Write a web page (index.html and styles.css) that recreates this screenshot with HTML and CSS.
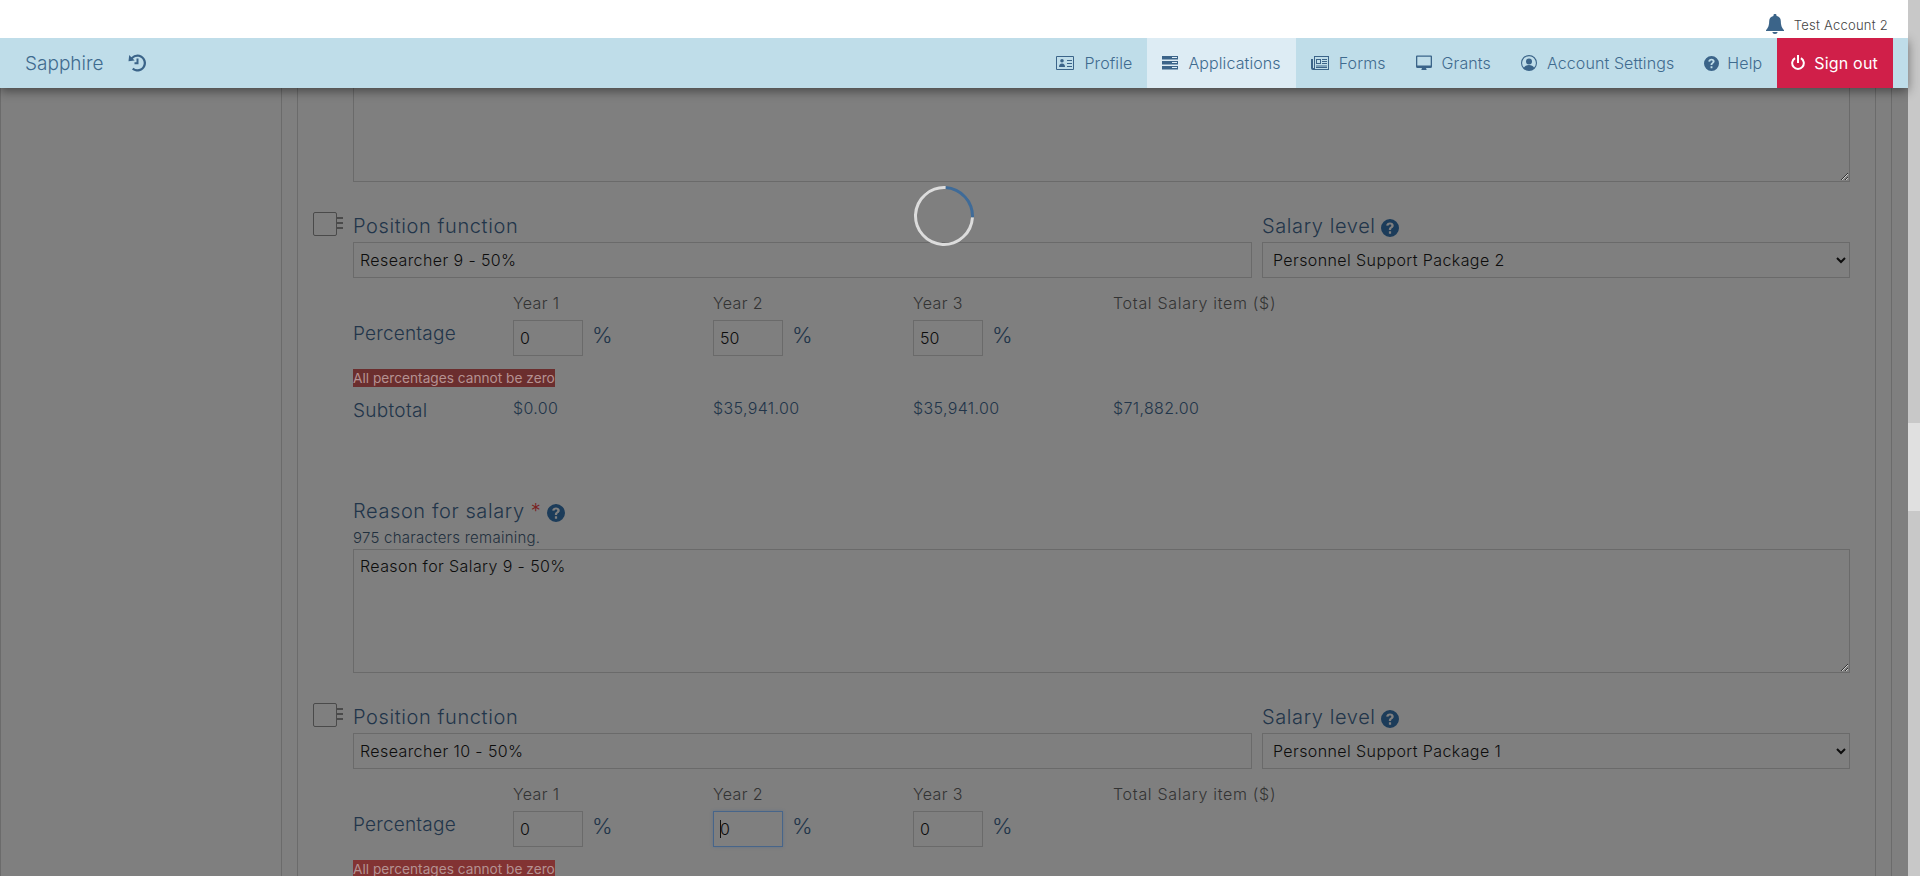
FILE: index.html

```html
<!DOCTYPE html>
<html lang="en">
<head>
  <meta charset="UTF-8">
  <meta name="viewport" content="width=device-width, initial-scale=1">
  <title>Sapphire</title>
  <link rel="stylesheet" href="styles.css">
</head>
<body>

  <div id="page">
    <div id="user-bar">
      <svg class="bell" viewBox="0 0 14 20" preserveAspectRatio="none"><path d="M7 0c-.7 0-1.2.5-1.200 1.200v.9C3.600 2.700 2.500 4.600 2.500 7c0 4.200-.7 6.500-2.500 9.200v.8h14v-.8C12.200 13.500 11.500 11.200 11.500 7c0-2.400-1.100-4.300-3.300-4.900v-.9C8.200.5 7.700 0 7 0zM5 18c0 1.100.9 2 2 2s2-.9 2-2H5z"/></svg>
      <span>Test Account 2</span>
    </div>

    <nav id="main-nav">
      <a class="brand">Sapphire</a>
      <svg class="history" viewBox="0 0 18 18"><path d="M9.500 0.500A8.500 8.500 0 0 0 3.300 3.200L1.200 1.100 0.500 7.300 6.700 6.600 4.800 4.700A6.300 6.300 0 1 1 9.500 15.300 6.300 6.300 0 0 1 5.400 13.800L4 15.500A8.500 8.500 0 1 0 9.500 0.500z"/><path d="M8.500 4.500h2v5.700H6.500v-2h2z"/></svg>
      <div class="nav-links">
        <a class="nav-item">
          <svg class="nav-icon wide" viewBox="0 0 18 14"><path fill-rule="evenodd" d="M1 0h16a1 1 0 0 1 1 1v12a1 1 0 0 1-1 1H1a1 1 0 0 1-1-1V1a1 1 0 0 1 1-1zm0 1v12h16V1H1zm5 2a1.800 1.800 0 1 1 0 3.600A1.800 1.800 0 0 1 6 3zM3 11c0-2 1-3.500 3-3.500S9 9 9 11H3zm8-7h5v1h-5zm0 3h5v1h-5zm0 3h5v1h-5z"/></svg>
          Profile
        </a>
        <a class="nav-item active">
          <svg class="nav-icon" viewBox="0 0 16 14"><path d="M0 0h16v3.500H0zM0 5h16v3.500H0zM0 10h16v3.500H0z"/><path fill="#ddecf4" d="M10 1h5v1h-5zM10 6h5v1h-5zM10 11h5v1h-5z"/></svg>
          Applications
        </a>
        <a class="nav-item">
          <svg class="nav-icon wide" viewBox="0 0 18 14"><path fill-rule="evenodd" d="M3 0h15v14H2a2 2 0 0 1-2-2V3h2v9h1V0zm1 1v12h13V1H4zm1 2h5v5H5V3zm1 1v3h3V4H6zm5-1h5v1h-5zm0 2h5v1h-5zm0 2h5v1h-5zM5 9.500h11v1H5zM5 11h11v1H5z"/></svg>
          Forms
        </a>
        <a class="nav-item">
          <svg class="nav-icon tall" viewBox="0 0 16 15"><path fill-rule="evenodd" d="M1 0h14a1 1 0 0 1 1 1v10a1.500 1.500 0 0 1-1.500 1.500h-13A1.500 1.500 0 0 1 0 11V1a1 1 0 0 1 1-1zm.300 1.300V10h13.400V1.300H1.300z"/><path d="M6 12.500h4l.7 2H5.300z"/></svg>
          Grants
        </a>
        <a class="nav-item">
          <svg class="nav-icon tall" viewBox="0 0 16 16"><path fill-rule="evenodd" d="M8 0a8 8 0 1 1 0 16A8 8 0 0 1 8 0zm0 1.200a6.800 6.800 0 0 0-5 11.400C3.800 11 5.500 10 8 10s4.200 1 5 2.600A6.800 6.800 0 0 0 8 1.200zM8 3.500a3 3 0 1 1 0 6 3 3 0 0 1 0-6z"/></svg>
          Account Settings
        </a>
        <a class="nav-item help">
          <svg class="nav-icon small" viewBox="0 0 16 16"><path fill-rule="evenodd" d="M8 0a8 8 0 1 1 0 16A8 8 0 0 1 8 0zM8 3C6 3 4.800 4.100 4.600 5.800l2 .3C6.700 5.300 7.200 4.800 8 4.800c.7 0 1.200.4 1.200 1 0 .5-.3.800-1 1.300C7.400 7.700 7 8.200 7 9.300v.4h2v-.3c0-.5.200-.8.900-1.300.8-.6 1.400-1.200 1.400-2.400C11.300 4 9.900 3 8 3zM7 10.800V13h2v-2.200H7z"/></svg>
          Help
        </a>
        <a class="nav-item sign-out">
          <svg class="nav-icon small" viewBox="0 0 14 16"><path d="M6 0h2v8H6z"/><path d="M3.500 2.300l1.100 1.700a4.800 4.800 0 1 0 4.800 0l1.100-1.700a6.800 6.800 0 1 1-7 0z"/></svg>
          Sign out
        </a>
      </div>
    </nav>

    <main id="content">
      <div class="card">
        <div class="inner">
          <textarea class="long-text scrolled"></textarea>

          <section class="salary-item">
            <div class="drag-box"><span class="box"></span><span class="ticks"></span></div>
            <div class="fields">
              <div class="top-row">
                <div>
                  <label class="big-label">Position function</label>
                  <input class="text-input" type="text" value="Researcher 9 - 50%">
                </div>
                <div>
                  <label class="big-label">Salary level
                    <svg class="q-icon" viewBox="0 0 18 18"><use href="#q"/></svg>
                  </label>
                  <select class="text-input"><option>Personnel Support Package 2</option></select>
                </div>
              </div>

              <div class="year-row heads">
                <span></span><span>Year 1</span><span>Year 2</span><span>Year 3</span><span class="total">Total Salary item ($)</span>
              </div>
              <div class="year-row pct">
                <span class="row-label">Percentage</span>
                <span class="pct-cell"><input class="pct-input" type="text" value="0"> %</span>
                <span class="pct-cell"><input class="pct-input" type="text" value="50"> %</span>
                <span class="pct-cell"><input class="pct-input" type="text" value="50"> %</span>
              </div>
              <div class="err-line"><span class="err">All percentages cannot be zero</span></div>
              <div class="year-row subtotal">
                <span class="row-label">Subtotal</span><span>$0.00</span><span>$35,941.00</span><span>$35,941.00</span><span>$71,882.00</span>
              </div>

              <label class="big-label reason">Reason for salary <i class="req">*</i>
                <svg class="q-icon" viewBox="0 0 18 18"><use href="#q"/></svg>
              </label>
              <div class="remaining">975 characters remaining.</div>
              <textarea class="long-text">Reason for Salary 9 - 50%</textarea>
            </div>
          </section>

          <section class="salary-item">
            <div class="drag-box"><span class="box"></span><span class="ticks"></span></div>
            <div class="fields">
              <div class="top-row">
                <div>
                  <label class="big-label">Position function</label>
                  <input class="text-input" type="text" value="Researcher 10 - 50%">
                </div>
                <div>
                  <label class="big-label">Salary level
                    <svg class="q-icon" viewBox="0 0 18 18"><use href="#q"/></svg>
                  </label>
                  <select class="text-input"><option>Personnel Support Package 1</option></select>
                </div>
              </div>

              <div class="year-row heads">
                <span></span><span>Year 1</span><span>Year 2</span><span>Year 3</span><span class="total">Total Salary item ($)</span>
              </div>
              <div class="year-row pct">
                <span class="row-label">Percentage</span>
                <span class="pct-cell"><input class="pct-input" type="text" value="0"> %</span>
                <span class="pct-cell focused"><input class="pct-input" type="text" value="0"><b class="caret"></b> %</span>
                <span class="pct-cell"><input class="pct-input" type="text" value="0"> %</span>
              </div>
              <div class="err-line"><span class="err second">All percentages cannot be zero</span></div>
            </div>
          </section>
        </div>
      </div>
    </main>

    <div class="spinner"></div>
  </div>

  <div id="scrollbar"><div class="thumb"></div></div>

  <svg class="defs" width="0" height="0">
    <symbol id="q" viewBox="0 0 16 16"><path fill-rule="evenodd" d="M8 0a8 8 0 1 1 0 16A8 8 0 0 1 8 0zM8 3C6 3 4.800 4.100 4.600 5.800l2 .3C6.700 5.300 7.200 4.800 8 4.800c.7 0 1.200.4 1.200 1 0 .5-.3.800-1 1.300C7.400 7.700 7 8.200 7 9.300v.4h2v-.3c0-.5.200-.8.900-1.300.8-.6 1.400-1.200 1.400-2.400C11.300 4 9.900 3 8 3zM7 10.800V13h2v-2.200H7z"/></symbol>
  </svg>

</body>
</html>
```

FILE: styles.css

```css
* {
  box-sizing: border-box;
}

html, body {
  height: 100%;
  overflow: hidden;
}

body {
  margin: 0;
  font-family: Inter, "Open Sans", sans-serif;
  font-weight: 300;
  display: flex;
  background: #7f7f7f;
}

#page {
  flex: 1;
  min-width: 0;
  height: 100%;
  display: flex;
  flex-direction: column;
  position: relative;
}

/* top strip */
#user-bar {
  height: 38px;
  flex: none;
  background: #fff;
  display: flex;
  align-items: center;
  justify-content: flex-end;
  gap: 10px;
  padding: 12px 20px 0 0;
  font-size: 13px;
  letter-spacing: 0.25px;
  color: #444;
  position: relative;
  z-index: 3;
}

.bell {
  width: 18px;
  height: 20px;
  fill: #3b6489;
  margin-top: -2px;
}

/* main nav */
#main-nav {
  height: 50px;
  flex: none;
  background: #bfdde9;
  display: flex;
  align-items: center;
  padding: 0 15px 0 25px;
  box-shadow: 0 3px 10px rgba(0, 0, 0, 0.45);
  position: relative;
  z-index: 2;
}

.brand {
  font-size: 19px;
  color: #3f6b8f;
}

.history {
  width: 18px;
  height: 18px;
  margin-left: 25px;
  fill: #3b6489;
}

.nav-links {
  margin-left: auto;
  display: flex;
  height: 100%;
}

.nav-item {
  display: flex;
  align-items: center;
  gap: 10px;
  padding: 0 15px;
  font-size: 16px;
  letter-spacing: 0.1px;
  color: #3f6b8f;
}

.nav-item.active {
  background: #ddecf4;
}

.nav-item.help {
  gap: 8px;
}

.nav-item.sign-out {
  background: #d01f49;
  color: #fff;
  font-weight: 400;
  padding-left: 14px;
  gap: 9px;
  letter-spacing: 0.2px;
}

.nav-icon {
  width: 16px;
  height: 14px;
  fill: #3b6489;
}

.nav-icon.wide {
  width: 18px;
}

.nav-icon.tall {
  height: 16px;
}

.nav-icon.small {
  height: 15px;
  width: 15px;
}

.sign-out .nav-icon {
  width: 14px;
  height: 16px;
  fill: #fff;
}

/* page behind the overlay */
#content {
  flex: 1;
  min-height: 0;
  overflow: hidden;
  padding-left: 280px;
  border-left: 1px solid #6b6b6b;
  background: #7f7f7f;
}

.card {
  margin-right: 16px;
  height: 100%;
  padding: 0 15px;
  border-left: 1px solid #6b6b6b;
  border-right: 1px solid #6b6b6b;
}

.inner {
  display: flow-root;
  height: 100%;
  padding: 0 25px 0 15px;
  border-left: 1px solid #6b6b6b;
  border-right: 1px solid #6b6b6b;
}

.long-text {
  display: block;
  width: 100%;
  height: 124px;
  padding: 6px;
  background: transparent;
  border: 1px solid #6a6a6a;
  border-radius: 0;
  font: 350 16px Inter, sans-serif;
  letter-spacing: 0.4px;
  color: #0d0d0d;
}

.long-text.scrolled {
  margin-left: 40px;
  width: calc(100% - 40px);
  margin-top: -30px;
}

.salary-item {
  display: flex;
  margin-top: 32px;
}

.drag-box {
  flex: none;
  width: 40px;
  display: flex;
  align-items: flex-start;
  margin-top: -2px;
}

.box {
  width: 24px;
  height: 24px;
  border: 1px solid #4a4a4a;
  border-radius: 2px;
}

.ticks {
  width: 6px;
  height: 12px;
  margin-top: 5px;
  border-top: 2px solid #4a4a4a;
  border-bottom: 2px solid #4a4a4a;
  background: linear-gradient(#4a4a4a, #4a4a4a) center / 100% 2px no-repeat;
}

.fields {
  flex: 1;
  min-width: 0;
}

.top-row {
  display: grid;
  grid-template-columns: 899px 1fr;
  gap: 10px;
}

.big-label {
  display: block;
  height: 24px;
  margin-bottom: 4px;
  font-size: 20px;
  line-height: 24px;
  letter-spacing: 0.6px;
  color: #22354a;
}

.text-input {
  display: block;
  width: 100%;
  height: 36px;
  padding: 0 6px;
  background: transparent;
  border: 1px solid #6a6a6a;
  border-radius: 0;
  font: 350 16px Inter, sans-serif;
  letter-spacing: 0.4px;
  color: #0d0d0d;
}

.q-icon {
  width: 18px;
  height: 18px;
  fill: #1c3c5a;
  vertical-align: -4px;
  margin-left: -1px;
}

.year-row {
  display: grid;
  grid-template-columns: 160px 200px 200px 200px 1fr;
}

.heads {
  margin-top: 15px;
  margin-bottom: 7px;
  height: 20px;
  font-size: 16px;
  line-height: 21px;
  letter-spacing: 0.35px;
  color: #333;
}

.total {
  letter-spacing: 0.7px;
}

.pct {
  height: 36px;
  align-items: center;
}

.row-label {
  font-size: 19px;
  letter-spacing: 0.2px;
  color: #22354a;
}

.pct .row-label {
  margin-top: -9px;
}

.pct-cell {
  position: relative;
  display: flex;
  gap: 9px;
  font-size: 22px;
  line-height: 30px;
  color: #22354a;
}

.pct-input {
  width: 70px;
  height: 36px;
  padding: 0 6px;
  background: transparent;
  border: 1px solid #6a6a6a;
  border-radius: 0;
  font: 350 16px Inter, sans-serif;
  color: #0d0d0d;
}

.focused .pct-input {
  border-color: #47658a;
  box-shadow: 0 0 3px rgba(60, 100, 150, 0.4);
}

.caret {
  position: absolute;
  left: 7px;
  top: 9px;
  width: 1px;
  height: 18px;
  background: #111;
}

.err-line {
  margin-top: 13px;
  height: 18px;
}

.err {
  display: block;
  width: fit-content;
  height: 18px;
  font-size: 13.700px;
  font-weight: 400;
  line-height: 18px;
  background: #6b2e2e;
  color: #b59292;
}

.err.second {
  background: #823333;
}

.subtotal {
  margin-top: 12px;
  height: 24px;
  font-size: 16px;
  line-height: 18px;
  letter-spacing: 0.35px;
  color: #22354a;
}

.subtotal .row-label {
  line-height: 24px;
  letter-spacing: 0.3px;
}

.reason {
  margin: 76px 0 5px;
}

.req {
  color: #7b2222;
  font-style: normal;
}

.remaining {
  height: 20px;
  margin-bottom: 1px;
  font-size: 15px;
  line-height: 20px;
  letter-spacing: 0.25px;
  color: #22303e;
}

/* loading spinner sits over everything */
.spinner {
  position: absolute;
  left: 914px;
  top: 186px;
  width: 60px;
  height: 60px;
  border: 3px solid #dcdcdc;
  border-top-color: #3f6b98;
  border-radius: 50%;
  transform: rotate(48deg);
}

#scrollbar {
  flex: none;
  width: 12px;
  height: 100%;
  background: #c8c8c8;
  padding-top: 423px;
}

.thumb {
  height: 88px;
  background: #e0e0e0;
}

.defs {
  position: absolute;
}
```
